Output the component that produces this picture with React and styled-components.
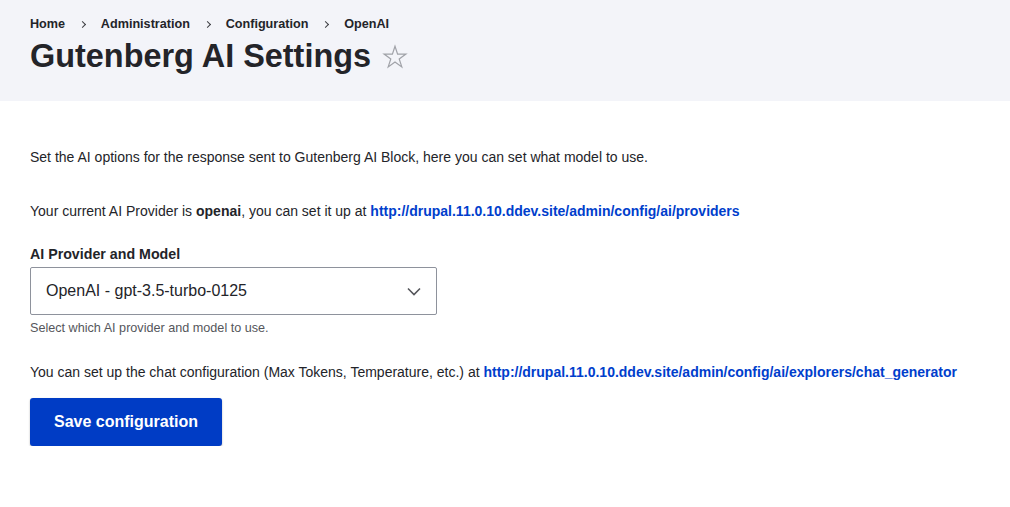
import React from "react";
import styled, { createGlobalStyle } from "styled-components";

const Global = createGlobalStyle`
  html, body { margin: 0; padding: 0; background: #fff; }
  body { font-family: "Liberation Sans", Arial, sans-serif; font-size: 14px; color: #232429; line-height: 18px; }
`;
const Header = styled.header`
  background: #f3f4f9;
  height: 101px;
  box-sizing: border-box;
  padding: 15px 30px 0;
`;
const Crumbs = styled.ol`
  list-style: none;
  margin: 0;
  padding: 0;
  display: flex;
  align-items: center;
  height: 18px;
  font-size: 12.64px;
  font-weight: 700;
`;
const Crumb = styled.li`
  display: flex;
  align-items: center;
  & + &::before {
    content: "";
    display: block;
    width: 5px;
    height: 5px;
    margin: 0 16px 0 14.75px;
    border-top: 1.5px solid #3b3c41;
    border-right: 1.5px solid #3b3c41;
    box-sizing: border-box;
    transform: rotate(45deg);
  }
`;
const TitleRow = styled.div`
  display: flex;
  align-items: center;
  margin-top: 2px;
  height: 42px;
`;
const Title = styled.h1`
  margin: 0;
  font-size: 32.44px;
  line-height: 42px;
  font-weight: 700;
`;
const Star = styled.svg`
  width: 26px;
  height: 26px;
  margin-left: 11px;
  margin-top: 2px;
`;
const Main = styled.main`
  padding: 47px 30px 0;
`;
const Para = styled.p`
  margin: 0 0 ${(p) => p.$after || 0}px;
  line-height: 18px;
`;
const Link = styled.a`
  color: #003ecc;
  font-weight: 700;
  text-decoration: none;
`;
const Label = styled.label`
  display: block;
  font-size: 14.22px;
  font-weight: 700;
  line-height: 18px;
  margin-bottom: 4px;
`;
const SelectBox = styled.div`
  width: 407px;
  height: 48px;
  box-sizing: border-box;
  border: 1px solid #8e929c;
  border-radius: 2px;
  padding: 0 15px;
  display: flex;
  align-items: center;
  justify-content: space-between;
  font-size: 16px;
`;
const Chevron = styled.svg`
  width: 14px;
  height: 9px;
`;
const Hint = styled.div`
  font-size: 12.64px;
  line-height: 17px;
  color: #55565b;
  margin-top: 5px;
  margin-bottom: 26px;
`;
const SaveButton = styled.button`
  display: block;
  margin-top: 17px;
  width: 192px;
  height: 48px;
  border: 0;
  border-radius: 3px;
  background: #003cc5;
  color: #fff;
  font: 700 16px "Liberation Sans", Arial, sans-serif;
  box-shadow: 0 1px 2px rgba(0, 0, 0, 0.3);
`;

export default function App() {
  return (
    <>
      <Global />
      <Header>
        <Crumbs>
          <Crumb>Home</Crumb>
          <Crumb>Administration</Crumb>
          <Crumb>Configuration</Crumb>
          <Crumb>OpenAI</Crumb>
        </Crumbs>
        <TitleRow>
          <Title>Gutenberg AI Settings</Title>
          <Star viewBox="0 0 26 26">
            <path d="M13 2.2l2.6 7.9h8.3l-6.7 4.9 2.6 7.9L13 18.1l-6.8 4.8 2.6-7.9-6.7-4.9h8.3z" fill="none" stroke="#a0a2a8" strokeWidth="1.2" />
          </Star>
        </TitleRow>
      </Header>
      <Main>
        <Para $after={36}>Set the AI options for the response sent to Gutenberg AI Block, here you can set what model to use.</Para>
        <Para $after={25}>
          Your current AI Provider is <b>openai</b>, you can set it up at{" "}
          <Link href="#">http://drupal.11.0.10.ddev.site/admin/config/ai/providers</Link>
        </Para>
        <Label>AI Provider and Model</Label>
        <SelectBox>
          <span>OpenAI - gpt-3.5-turbo-0125</span>
          <Chevron viewBox="0 0 14 9">
            <path d="M1 1.5l6 6 6-6" fill="none" stroke="#55565b" strokeWidth="1.6" />
          </Chevron>
        </SelectBox>
        <Hint>Select which AI provider and model to use.</Hint>
        <Para>
          You can set up the chat configuration (Max Tokens, Temperature, etc.) at{" "}
          <Link href="#">http://drupal.11.0.10.ddev.site/admin/config/ai/explorers/chat_generator</Link>
        </Para>
        <SaveButton>Save configuration</SaveButton>
      </Main>
    </>
  );
}
